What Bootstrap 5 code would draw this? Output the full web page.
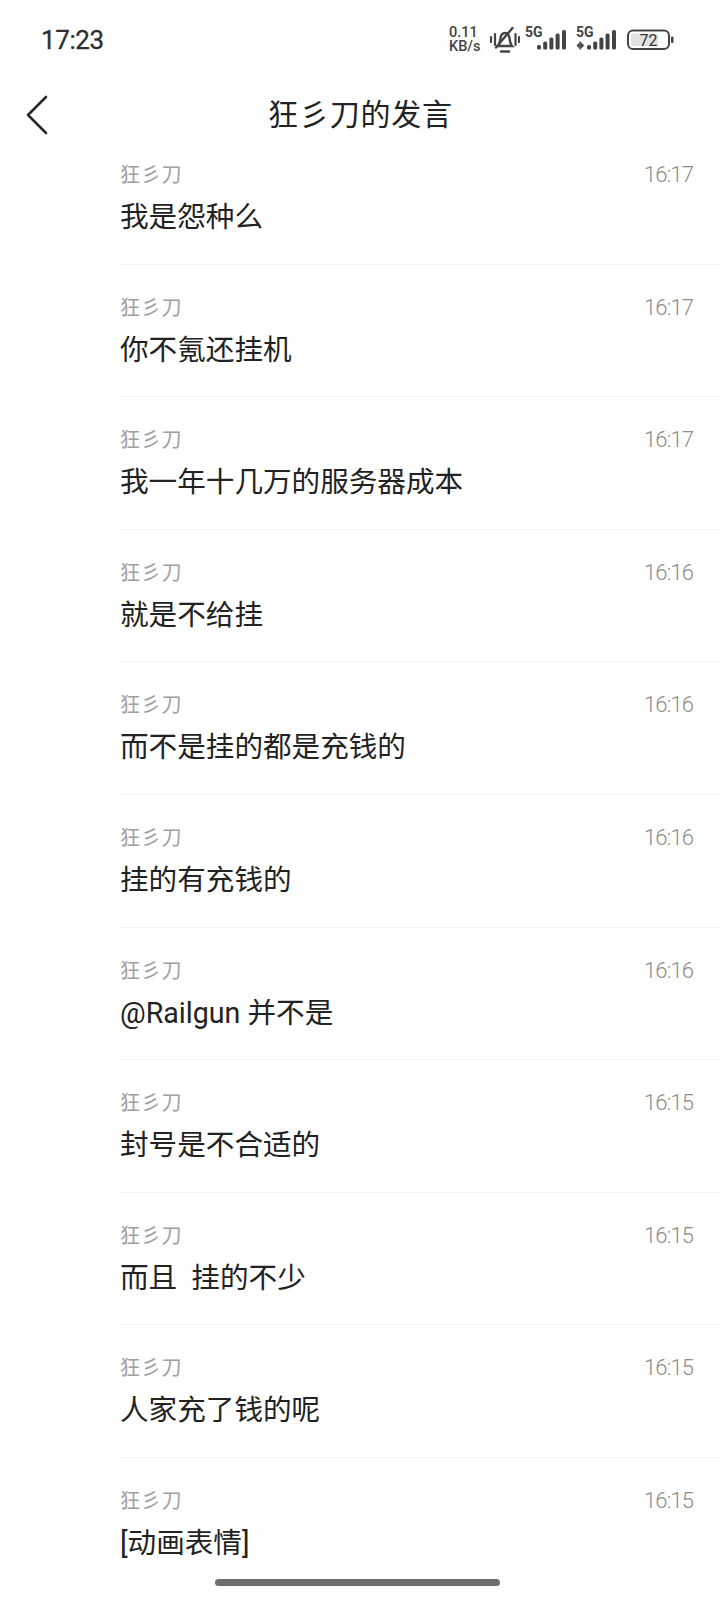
<!doctype html>
<html lang="zh"><head><meta charset="utf-8">
<title>狂彡刀的发言</title>
<link href="https://cdn.jsdelivr.net/npm/bootstrap@5.3.0/dist/css/bootstrap.min.css" rel="stylesheet">
<style>
html,body{height:1600px;overflow:hidden;background:#fff}
body{font-family:"Roboto","Noto Sans CJK SC",sans-serif;position:relative;color:#222}
.stat{height:80px;padding:0 46px 0 41px}
.clock{font-size:26px;font-weight:400;color:#2e2e2e;letter-spacing:-.4px;-webkit-text-stroke:.3px #2e2e2e}
.speed{width:34px;font-size:14.5px;line-height:14px;font-weight:500;color:#444;white-space:nowrap}
.gap-bell{margin-left:7px}.gap-sig{margin-left:5px}.gap-wide{margin-left:9px}
.head{height:72px;padding-bottom:8px}
.back{position:absolute;left:25px;top:95px}
.ttl{font-size:30px;font-family:"Noto Sans CJK SC",sans-serif;font-weight:400;line-height:1;color:#222;letter-spacing:.8px;margin-left:1px}
.feed{padding-left:120px}
.entry{height:132.6px;border-bottom:1px solid #f4f4f4;padding:27px 27px 0 0;box-sizing:border-box}
.entry:first-child{height:112.6px;padding-top:7px}
.who{font-family:"Noto Sans CJK SC",sans-serif;font-size:20px;line-height:30px;color:#a0a0a0;font-weight:400;letter-spacing:.8px}
.when{font-size:22px;line-height:32px;color:#8c8c8c;font-weight:300;letter-spacing:-.9px}
.msg{font-family:"Roboto","Noto Sans CJK SC",sans-serif;font-size:28.6px;line-height:42px;margin-top:5px;color:#222;white-space:pre}
.homebar{position:absolute;left:215px;top:1579px;width:285px;height:7px;border-radius:4px;background:#6e6e6e}
</style></head><body>
<div class="stat d-flex align-items-center justify-content-between">
  <div class="clock">17:23</div>
  <div class="d-flex align-items-center">
    <div class="speed">0.11<br>KB/s</div>
    <svg class="gap-bell" width="30" height="26" viewBox="0 0 30 26" fill="none" stroke="#444" stroke-width="2.4" stroke-linecap="round">
      <path d="M8 19c2-2 2-5 2.500-8 .5-3 2.500-5 4.500-5s4 2 4.500 5c.5 3 .5 6 2.500 8z"/><path d="M11 24.500h8"/><path d="M22.500 1 6 20.500"/><path d="M1 10v5M5 7v11M25.500 7v11M29 10v5" stroke-width="2.200"/>
    </svg>
    <svg class="gap-sig" width="42" height="30" viewBox="0 0 42 30"><text x="0" y="12" font-family="Roboto" font-size="14" font-weight="700" fill="#444">5G</text>
      <g fill="#444"><rect x="12" y="20" width="4" height="4.500" rx="1.500"/><rect x="18.200" y="16.500" width="4" height="8" rx="1.500"/><rect x="24.400" y="12.500" width="4" height="12" rx="1.500"/><rect x="30.600" y="8.500" width="4" height="16" rx="1.500"/><rect x="37" y="5" width="4" height="19.500" rx="1.500"/></g></svg>
    <svg class="gap-wide" width="42" height="30" viewBox="0 0 42 30"><text x="0" y="12" font-family="Roboto" font-size="14" font-weight="700" fill="#444">5G</text>
      <g fill="#444"><path d="M.5 20.500l3.200-3.200v6.400zM5 17.300l3.200 3.200L5 23.700z"/><rect x="3.500" y="16.500" width="1.400" height="8"/><rect x="11" y="20" width="4" height="4.500" rx="1.500"/><rect x="17.200" y="16.500" width="4" height="8" rx="1.500"/><rect x="23.400" y="12.500" width="4" height="12" rx="1.500"/><rect x="29.600" y="8.500" width="4" height="16" rx="1.500"/><rect x="36" y="5" width="4" height="19.500" rx="1.500"/></g></svg>
    <svg class="gap-wide" width="47" height="22" viewBox="0 0 47 22">
      <rect x="1" y="1.500" width="41" height="18.500" rx="5" fill="#fff" stroke="#444" stroke-width="2"/>
      <rect x="4" y="4.500" width="27" height="12.500" rx="2.500" fill="#e2e2e2"/>
      <text x="21.500" y="16.500" text-anchor="middle" font-family="Roboto" font-size="16" fill="#333">72</text>
      <rect x="44" y="7.500" width="2.500" height="6.500" rx="1" fill="#444"/>
    </svg>
  </div>
</div>
<svg class="back" width="24" height="40" viewBox="0 0 24 40" fill="none" stroke="#2a2a2a" stroke-width="2.6" stroke-linecap="round" stroke-linejoin="round"><path d="M21 2 3 20l18 18"/></svg>
<div class="head d-flex justify-content-center align-items-center"><div class="ttl">狂彡刀的发言</div></div>
<div class="feed">
  <div class="entry"><div class="d-flex justify-content-between"><span class="who">狂彡刀</span><span class="when">16:17</span></div><div class="msg">我是怨种么</div></div>
  <div class="entry"><div class="d-flex justify-content-between"><span class="who">狂彡刀</span><span class="when">16:17</span></div><div class="msg">你不氪还挂机</div></div>
  <div class="entry"><div class="d-flex justify-content-between"><span class="who">狂彡刀</span><span class="when">16:17</span></div><div class="msg">我一年十几万的服务器成本</div></div>
  <div class="entry"><div class="d-flex justify-content-between"><span class="who">狂彡刀</span><span class="when">16:16</span></div><div class="msg">就是不给挂</div></div>
  <div class="entry"><div class="d-flex justify-content-between"><span class="who">狂彡刀</span><span class="when">16:16</span></div><div class="msg">而不是挂的都是充钱的</div></div>
  <div class="entry"><div class="d-flex justify-content-between"><span class="who">狂彡刀</span><span class="when">16:16</span></div><div class="msg">挂的有充钱的</div></div>
  <div class="entry"><div class="d-flex justify-content-between"><span class="who">狂彡刀</span><span class="when">16:16</span></div><div class="msg">@Railgun 并不是</div></div>
  <div class="entry"><div class="d-flex justify-content-between"><span class="who">狂彡刀</span><span class="when">16:15</span></div><div class="msg">封号是不合适的</div></div>
  <div class="entry"><div class="d-flex justify-content-between"><span class="who">狂彡刀</span><span class="when">16:15</span></div><div class="msg">而且  挂的不少</div></div>
  <div class="entry"><div class="d-flex justify-content-between"><span class="who">狂彡刀</span><span class="when">16:15</span></div><div class="msg">人家充了钱的呢</div></div>
  <div class="entry border-0"><div class="d-flex justify-content-between"><span class="who">狂彡刀</span><span class="when">16:15</span></div><div class="msg">[动画表情]</div></div>
</div>
<div class="homebar"></div>
<script src="https://cdn.jsdelivr.net/npm/bootstrap@5.3.0/dist/js/bootstrap.bundle.min.js"></script>
</body></html>
